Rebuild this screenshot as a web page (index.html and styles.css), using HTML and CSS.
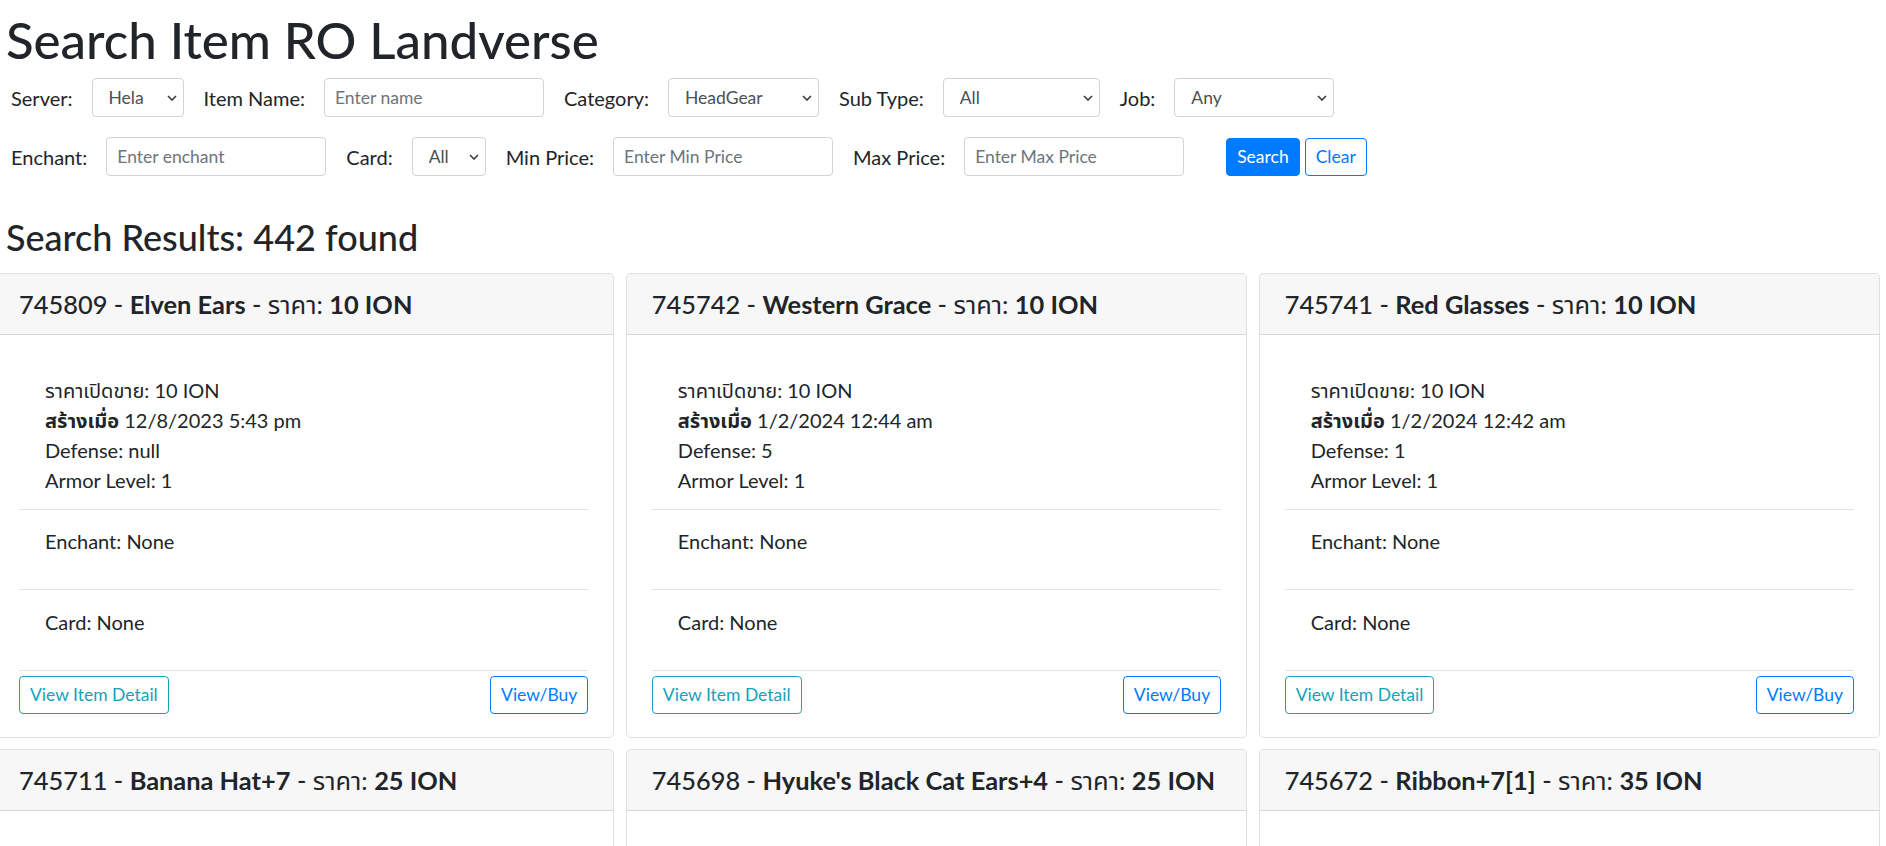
FILE: index.html
```html
<!DOCTYPE html>
<html lang="th">
<head>
<meta charset="utf-8">
<title>Search Item RO Landverse</title>
<link rel="stylesheet" href="styles.css">
</head>
<body>
<div class="page">
  <h1 class="title">Search Item RO Landverse</h1>
  <form class="filters">
    <div class="frow">
      <label class="flabel">Server:</label>
      <span class="sel sel-server"><select class="fc"><option>Hela</option></select><svg class="chev" viewBox="0 0 10 6"><path d="M1 1L5 5L9 1"/></svg></span>
      <label class="flabel">Item Name:</label>
      <input class="fc inp" type="text" placeholder="Enter name">
      <label class="flabel">Category:</label>
      <span class="sel sel-cat"><select class="fc"><option>HeadGear</option></select><svg class="chev" viewBox="0 0 10 6"><path d="M1 1L5 5L9 1"/></svg></span>
      <label class="flabel">Sub Type:</label>
      <span class="sel sel-sub"><select class="fc"><option>All</option></select><svg class="chev" viewBox="0 0 10 6"><path d="M1 1L5 5L9 1"/></svg></span>
      <label class="flabel">Job:</label>
      <span class="sel sel-job"><select class="fc"><option>Any</option></select><svg class="chev" viewBox="0 0 10 6"><path d="M1 1L5 5L9 1"/></svg></span>
    </div>
    <div class="frow">
      <label class="flabel">Enchant:</label>
      <input class="fc inp" type="text" placeholder="Enter enchant">
      <label class="flabel">Card:</label>
      <span class="sel sel-card"><select class="fc"><option>All</option></select><svg class="chev" viewBox="0 0 10 6"><path d="M1 1L5 5L9 1"/></svg></span>
      <label class="flabel">Min Price:</label>
      <input class="fc inp" type="text" placeholder="Enter Min Price">
      <label class="flabel">Max Price:</label>
      <input class="fc inp" type="text" placeholder="Enter Max Price">
      <button type="button" class="btn btn-primary btn-search">Search</button>
      <button type="button" class="btn btn-outline-primary">Clear</button>
    </div>
  </form>

  <h3 class="results">Search Results: 442 found</h3>

  <div class="grid">
    <div class="card">
      <div class="card-header">745809 - <b>Elven Ears</b> - <span class="th">ราคา:</span> <b>10 ION</b></div>
      <div class="card-body">
        <div class="specs">
          <div>ราคาเปิดขาย: 10 ION</div>
          <div><b>สร้างเมื่อ</b> 12/8/2023 5:43 pm</div>
          <div>Defense: null</div>
          <div>Armor Level: 1</div>
        </div>
        <hr class="sep">
        <div class="section">Enchant: None</div>
        <hr class="sep">
        <div class="section section-card">Card: None</div>
        <hr class="sep">
        <div class="actions">
          <button type="button" class="btn btn-outline-info">View Item Detail</button>
          <button type="button" class="btn btn-outline-primary">View/Buy</button>
        </div>
      </div>
    </div>
    <div class="card">
      <div class="card-header">745742 - <b>Western Grace</b> - <span class="th">ราคา:</span> <b>10 ION</b></div>
      <div class="card-body">
        <div class="specs">
          <div>ราคาเปิดขาย: 10 ION</div>
          <div><b>สร้างเมื่อ</b> 1/2/2024 12:44 am</div>
          <div>Defense: 5</div>
          <div>Armor Level: 1</div>
        </div>
        <hr class="sep">
        <div class="section">Enchant: None</div>
        <hr class="sep">
        <div class="section section-card">Card: None</div>
        <hr class="sep">
        <div class="actions">
          <button type="button" class="btn btn-outline-info">View Item Detail</button>
          <button type="button" class="btn btn-outline-primary">View/Buy</button>
        </div>
      </div>
    </div>
    <div class="card">
      <div class="card-header">745741 - <b>Red Glasses</b> - <span class="th">ราคา:</span> <b>10 ION</b></div>
      <div class="card-body">
        <div class="specs">
          <div>ราคาเปิดขาย: 10 ION</div>
          <div><b>สร้างเมื่อ</b> 1/2/2024 12:42 am</div>
          <div>Defense: 1</div>
          <div>Armor Level: 1</div>
        </div>
        <hr class="sep">
        <div class="section">Enchant: None</div>
        <hr class="sep">
        <div class="section section-card">Card: None</div>
        <hr class="sep">
        <div class="actions">
          <button type="button" class="btn btn-outline-info">View Item Detail</button>
          <button type="button" class="btn btn-outline-primary">View/Buy</button>
        </div>
      </div>
    </div>
    <div class="card">
      <div class="card-header">745711 - <b>Banana Hat+7</b> - <span class="th">ราคา:</span> <b>25 ION</b></div>
      <div class="card-body">
        <div class="specs">
          <div>ราคาเปิดขาย: 25 ION</div>
          <div><b>สร้างเมื่อ</b> 1/1/2024 11:20 pm</div>
          <div>Defense: 0</div>
          <div>Armor Level: 1</div>
        </div>
        <hr class="sep">
        <div class="section">Enchant: None</div>
        <hr class="sep">
        <div class="section section-card">Card: None</div>
        <hr class="sep">
        <div class="actions">
          <button type="button" class="btn btn-outline-info">View Item Detail</button>
          <button type="button" class="btn btn-outline-primary">View/Buy</button>
        </div>
      </div>
    </div>
    <div class="card">
      <div class="card-header">745698 - <b>Hyuke's Black Cat Ears+4</b> - <span class="th">ราคา:</span> <b>25 ION</b></div>
      <div class="card-body">
        <div class="specs">
          <div>ราคาเปิดขาย: 25 ION</div>
          <div><b>สร้างเมื่อ</b> 1/1/2024 10:58 pm</div>
          <div>Defense: 2</div>
          <div>Armor Level: 1</div>
        </div>
        <hr class="sep">
        <div class="section">Enchant: None</div>
        <hr class="sep">
        <div class="section section-card">Card: None</div>
        <hr class="sep">
        <div class="actions">
          <button type="button" class="btn btn-outline-info">View Item Detail</button>
          <button type="button" class="btn btn-outline-primary">View/Buy</button>
        </div>
      </div>
    </div>
    <div class="card">
      <div class="card-header">745672 - <b>Ribbon+7[1]</b> - <span class="th">ราคา:</span> <b>35 ION</b></div>
      <div class="card-body">
        <div class="specs">
          <div>ราคาเปิดขาย: 35 ION</div>
          <div><b>สร้างเมื่อ</b> 1/1/2024 9:41 pm</div>
          <div>Defense: 1</div>
          <div>Armor Level: 1</div>
        </div>
        <hr class="sep">
        <div class="section">Enchant: None</div>
        <hr class="sep">
        <div class="section section-card">Card: None</div>
        <hr class="sep">
        <div class="actions">
          <button type="button" class="btn btn-outline-info">View Item Detail</button>
          <button type="button" class="btn btn-outline-primary">View/Buy</button>
        </div>
      </div>
    </div>
  </div>
</div>
</body>
</html>
```

FILE: styles.css
```css
html, body {
  margin: 0;
  padding: 0;
}
body {
  font-family: Lato, "Noto Sans Thai", "Noto Sans", sans-serif;
  font-size: 20px;
  line-height: 1.5;
  color: #212529;
  background: #fff;
}
.page {
  padding: 10px 6px 0 6px;
}
.title {
  font-size: 51px;
  font-weight: 500;
  line-height: 60px;
  margin: 0 0 8px;
}
.filters {
  display: flex;
  flex-direction: column;
  gap: 20px;
  padding-left: 5px;
}
.frow {
  display: flex;
  align-items: center;
  height: 39px;
}
.flabel {
  margin-right: 19px;
  white-space: nowrap;
}
.fc {
  box-sizing: border-box;
  height: 39px;
  font-family: inherit;
  font-size: 17.5px;
  color: #495057;
  background: #fff;
  border: 1px solid #ced4da;
  border-radius: 4px;
  margin: 0;
}
.inp {
  width: 220px;
  padding: 0 10px;
  margin-right: 20px;
}
.inp::placeholder {
  color: #6c757d;
}
.sel {
  position: relative;
  display: inline-flex;
  margin-right: 20px;
}
.sel select {
  -webkit-appearance: none;
  appearance: none;
  width: 100%;
  padding: 0 24px 0 16px;
}
.chev {
  position: absolute;
  right: 7px;
  top: 17px;
  width: 10px;
  height: 6px;
  fill: none;
  stroke: #3a3a3a;
  stroke-width: 1.6;
  pointer-events: none;
}
.sel-server { width: 92px; }
.sel-cat { width: 151px; }
.sel-sub { width: 157px; }
.sel-job { width: 160px; }
.sel-card { width: 74px; }

.btn {
  box-sizing: border-box;
  font-family: inherit;
  font-size: 17.5px;
  line-height: 26px;
  padding: 5px 10px;
  border-radius: 4px;
  border: 1px solid;
  background: #fff;
  cursor: pointer;
  margin: 0;
}
.btn-primary {
  background: #007bff;
  border-color: #007bff;
  color: #fff;
}
.btn-search {
  margin-left: 22px;
  margin-right: 5px;
}
.btn-outline-primary {
  color: #007bff;
  border-color: #007bff;
}
.btn-outline-info {
  color: #17a2b8;
  border-color: #17a2b8;
}
.results {
  font-size: 36px;
  font-weight: 500;
  line-height: 42px;
  margin: 40px 0 15px;
}
.grid {
  display: grid;
  grid-template-columns: repeat(3, 1fr);
  column-gap: 11.5px;
  row-gap: 11px;
  margin-left: -13px;
}
.card {
  border: 1px solid rgba(0, 0, 0, 0.125);
  border-radius: 5px;
  overflow: hidden;
  background: #fff;
}
.card-header {
  background: #f7f7f7;
  border-bottom: 1px solid rgba(0, 0, 0, 0.125);
  padding: 15px 25px;
  font-size: 25.4px;
  line-height: 30px;
  font-weight: 500;
  white-space: nowrap;
}
.card-header b {
  font-weight: 700;
}
.card-header .th {
  font-weight: 400;
}
.card-body {
  padding: 25px 25px 23px;
  line-height: 30px;
}
.specs {
  padding: 15px 0 14px 26px;
}
.sep {
  height: 1px;
  border: 0;
  margin: 0;
  background: rgba(0, 0, 0, 0.11);
}
.section {
  padding: 16px 0 33px 26px;
}
.section-card {
  padding-top: 17px;
}
.actions {
  display: flex;
  justify-content: space-between;
  margin-top: 5px;
}
```
